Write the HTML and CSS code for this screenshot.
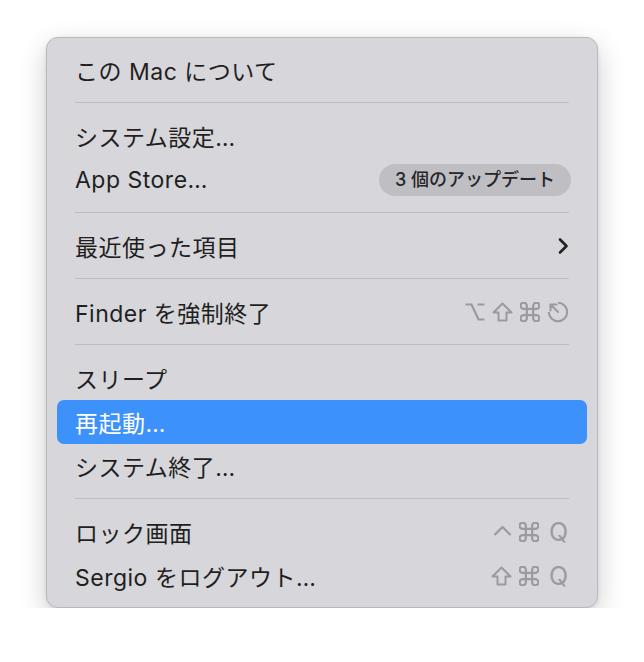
FILE: index.html
```html
<!DOCTYPE html>
<html lang="ja">
<head>
<meta charset="utf-8">
<link rel="stylesheet" href="styles.css">
</head>
<body>
<div class="menu">
  <div class="item"><span class="label">この Mac について</span></div>
  <div class="sep"></div>
  <div class="item"><span class="label">システム設定…</span></div>
  <div class="item"><span class="label">App Store…</span><span class="badge">3 個のアップデート</span></div>
  <div class="sep"></div>
  <div class="item"><span class="label">最近使った項目</span>
    <svg class="chev" width="12" height="18" viewBox="0 0 12 18"><path d="M3 2.5 L9.5 9 L3 15.5" fill="none" stroke="#222" stroke-width="2.6" stroke-linecap="round" stroke-linejoin="round"/></svg>
  </div>
  <div class="sep"></div>
  <div class="item"><span class="label">Finder を強制終了</span>
    <span class="keys">
      <svg class="key" width="20" height="20" viewBox="0 0 20 20"><path d="M0.5 2.5 H6.5 L13.5 17.5 H19.5 M12.5 2.5 H19.5" fill="none" stroke="currentColor" stroke-width="2.2"/></svg>
      <svg class="key" width="21" height="20" viewBox="0 0 21 20"><path d="M10.5 1.5 L19.5 10.5 H14.5 V18.5 H6.5 V10.5 H1.5 Z" fill="none" stroke="currentColor" stroke-width="2" stroke-linejoin="round"/></svg>
      <svg class="key" width="20" height="20" viewBox="2.5 2.5 19 19"><path d="M15 6v12a3 3 0 1 0 3-3H6a3 3 0 1 0 3 3V6a3 3 0 1 0-3 3h12a3 3 0 1 0-3-3" fill="none" stroke="currentColor" stroke-width="2.1"/></svg>
      <svg class="key" width="22" height="22" viewBox="0 0 22 22"><path d="M11 1.8 A9.2 9.2 0 1 1 1.8 11" fill="none" stroke="currentColor" stroke-width="2.1"/><path d="M11 11 L4 4 M3.5 3.5 H9.5 M3.5 3.5 V9.5" fill="none" stroke="currentColor" stroke-width="2.1" stroke-linecap="round"/></svg>
    </span>
  </div>
  <div class="sep"></div>
  <div class="item"><span class="label">スリープ</span></div>
  <div class="item active"><span class="label">再起動…</span></div>
  <div class="item"><span class="label">システム終了…</span></div>
  <div class="sep"></div>
  <div class="item"><span class="label">ロック画面</span>
    <span class="keys">
      <svg class="key up" width="19" height="13" viewBox="0 0 19 13"><path d="M1.5 11 L9.5 3 L17.5 11" fill="none" stroke="currentColor" stroke-width="2.2"/></svg>
      <svg class="key" width="20" height="20" viewBox="2.5 2.5 19 19"><path d="M15 6v12a3 3 0 1 0 3-3H6a3 3 0 1 0 3 3V6a3 3 0 1 0-3 3h12a3 3 0 1 0-3-3" fill="none" stroke="currentColor" stroke-width="2.1"/></svg>
      <span class="q">Q</span>
    </span>
  </div>
  <div class="item"><span class="label">Sergio をログアウト…</span>
    <span class="keys">
      <svg class="key" width="21" height="20" viewBox="0 0 21 20"><path d="M10.5 1.5 L19.5 10.5 H14.5 V18.5 H6.5 V10.5 H1.5 Z" fill="none" stroke="currentColor" stroke-width="2" stroke-linejoin="round"/></svg>
      <svg class="key" width="20" height="20" viewBox="2.5 2.5 19 19"><path d="M15 6v12a3 3 0 1 0 3-3H6a3 3 0 1 0 3 3V6a3 3 0 1 0-3 3h12a3 3 0 1 0-3-3" fill="none" stroke="currentColor" stroke-width="2.1"/></svg>
      <span class="q">Q</span>
    </span>
  </div>
</div>
</body>
</html>
```

FILE: styles.css
```css
html, body {
  margin: 0;
  background: #ffffff;
}
body {
  padding: 37px 0 0 46px;
  font-family: "Inter", "Noto Sans CJK JP", sans-serif;
}
.menu {
  box-sizing: border-box;
  width: 552px;
  padding: 10px 10px 9px;
  background: #d6d6db;
  border: 1px solid #b9b9bd;
  border-radius: 12px;
  box-shadow: 0 10px 28px rgba(0, 0, 0, 0.2), 0 1px 4px rgba(0, 0, 0, 0.08);
}
.item {
  height: 44px;
  display: flex;
  align-items: center;
  justify-content: space-between;
  padding: 0 18px;
  border-radius: 7px;
  color: #1f1f21;
  font-size: 23px;
}
.item.active {
  background: #3d91fb;
  color: #ffffff;
}
.label {
  white-space: nowrap;
  letter-spacing: 0.5px;
}
.sep {
  height: 1px;
  margin: 10px 18px 11px;
  background: #bdbdc1;
}
.badge {
  margin-right: -2px;
  padding: 0 16px;
  height: 32px;
  line-height: 32px;
  border-radius: 16px;
  background: #bebec3;
  font-size: 18px;
  color: #262628;
  font-weight: 500;
}
.chev {
  display: block;
}
.keys {
  display: flex;
  align-items: center;
  gap: 7px;
  color: #9b9b9f;
}
.key {
  display: block;
}
.key.up {
  margin-bottom: 4px;
}
.q {
  font-size: 25px;
  margin-left: 3px;
  margin-right: 1px;
  color: #9b9b9f;
}
```
